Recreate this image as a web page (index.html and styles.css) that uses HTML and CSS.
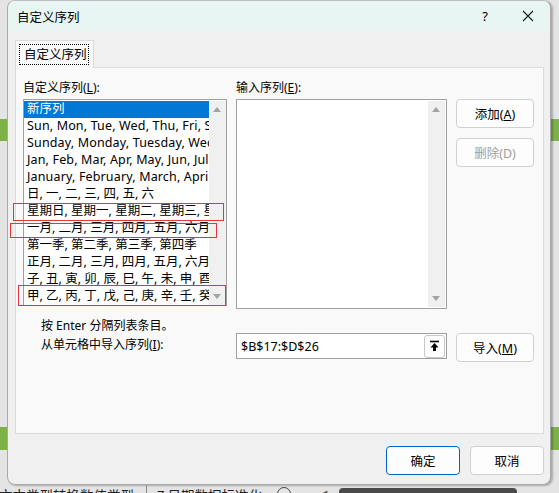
FILE: index.html
```html
<!DOCTYPE html>
<html lang="zh-CN">
<head>
<meta charset="utf-8">
<title>自定义序列</title>
<link rel="stylesheet" href="styles.css">
</head>
<body>
<div class="desk">
  <div class="dialog">
    <div class="titlebar">
      <span class="title">自定义序列</span>
      <span class="help">?</span>
      <span class="close"><svg width="12" height="12" viewBox="0 0 12 12"><path d="M1 1 L11 11 M11 1 L1 11" stroke="#1a1a1a" stroke-width="1.1" fill="none"/></svg></span>
    </div>
    <div class="content">
      <div class="tabs"><div class="tab"><span class="tab-focus">自定义序列</span></div></div>
      <div class="panel">
        <div class="row labels">
          <div class="col-left">自定义序列(<u>L</u>):</div>
          <div class="col-right">输入序列(<u>E</u>):</div>
        </div>
        <div class="row lists">
          <div class="listbox">
            <ul class="items">
              <li class="selected">新序列</li>
              <li class="lat">Sun, Mon, Tue, Wed, Thu, Fri, Sat</li>
              <li class="lat">Sunday, Monday, Tuesday, Wednesday</li>
              <li class="lat">Jan, Feb, Mar, Apr, May, Jun, Jul</li>
              <li class="lat">January, February, March, April, May</li>
              <li>日, 一, 二, 三, 四, 五, 六</li>
              <li>星期日, 星期一, 星期二, 星期三, 星期四</li>
              <li>一月, 二月, 三月, 四月, 五月, 六月, 七月</li>
              <li>第一季, 第二季, 第三季, 第四季</li>
              <li>正月, 二月, 三月, 四月, 五月, 六月, 七月</li>
              <li>子, 丑, 寅, 卯, 辰, 巳, 午, 未, 申, 酉, 戌</li>
              <li>甲, 乙, 丙, 丁, 戊, 己, 庚, 辛, 壬, 癸</li>
            </ul>
            <div class="scrollbar">
              <span class="arrow up"></span>
              <span class="arrow down"></span>
            </div>
            <span class="mark mark1"></span>
            <span class="mark mark2"></span>
            <span class="mark mark3"></span>
          </div>
          <div class="textarea">
            <div class="ta-body"></div>
            <div class="scrollbar">
              <span class="arrow up"></span>
              <span class="arrow down"></span>
            </div>
          </div>
          <div class="side-buttons">
            <button class="btn">添加(<u>A</u>)</button>
            <button class="btn disabled">删除(D)</button>
          </div>
        </div>
        <div class="hint">按 Enter 分隔列表条目。</div>
        <div class="row import">
          <div class="import-label">从单元格中导入序列(<u>I</u>):</div>
          <div class="refbox">
            <span class="ref-text">$B$17:$D$26</span>
            <span class="ref-btn"><svg width="11" height="12" viewBox="0 0 11 12"><path d="M1 1.5 H10" stroke="#000" stroke-width="1.6"/><path d="M5.5 3 L1.5 7.5 H4 V11 H7 V7.5 H9.5 Z" fill="#000"/></svg></span>
          </div>
          <button class="btn import-btn">导入(<u>M</u>)</button>
        </div>
      </div>
      <div class="footer">
        <button class="btn default">确定</button>
        <button class="btn">取消</button>
      </div>
    </div>
  </div>
  <div class="sheetbar">
    <span class="sheet sheet1">文本类型转换数值类型</span>
    <span class="sheet sheet2">7 日期数据标准化</span>
    <span class="sheet-tools">
      <span class="circle"></span>
      <span class="plus">+</span>
      <span class="left">◀</span>
      <span class="hscroll"></span>
    </span>
  </div>
</div>
</body>
</html>
```

FILE: styles.css
```css
* { box-sizing: border-box; }
html, body { margin: 0; padding: 0; }
body {
  width: 559px;
  height: 493px;
  overflow: hidden;
  font-family: "Noto Sans", "Noto Sans CJK SC", sans-serif;
  font-size: 12px;
  color: #000;
  background: linear-gradient(to bottom,
    #e4e4e4 0, #e4e4e4 119px,
    #7db246 119px, #7db246 141px,
    #e4e4e4 141px, #e4e4e4 427px,
    #7db246 427px, #7db246 450px,
    #e4e4e4 450px);
}
.desk { width: 559px; height: 493px; }

.dialog {
  margin-left: 7px;
  width: 544px;
  height: 485px;
  border: 1px solid #a9a9a9;
  border-top-color: #bcbcbc;
  border-radius: 8px;
  background: #f0f0f0;
  box-shadow: 2px 1px 2px rgba(0,0,0,0.25);
  overflow: hidden;
  display: flex;
  flex-direction: column;
}

.titlebar {
  height: 30px;
  background: #e7f6f2;
  display: flex;
  align-items: center;
  padding-left: 9px;
  flex: none;
}
.title { font-size: 12.5px; flex: 1; }
.help { font-size: 13px; width: 14px; margin-right: 30px; text-align: center; }
.close { width: 12px; margin-right: 16px; display: flex; }

.content {
  flex: 1;
  padding: 9px 6px 0 7px;
  display: flex;
  flex-direction: column;
}

.tabs { display: flex; height: 27px; }
.tab {
  width: 79px;
  height: 28px;
  background: #f9f9f9;
  border: 1px solid #dcdcdc;
  border-bottom: none;
  padding: 3px 4px 2px 3px;
  position: relative;
  z-index: 1;
}
.tab-focus {
  display: block;
  height: 21px;
  border: 1px dotted #000;
  line-height: 19px;
  padding-left: 4px;
  font-size: 12.5px;
}

.panel {
  height: 367px;
  background: #f9f9f9;
  border: 1px solid #dcdcdc;
  padding: 12px 8px 0 7px;
}

.row { display: flex; }
.labels { height: 19px; line-height: 15px; }
.col-left { width: 213px; }
.col-right { width: 210px; }

.lists { align-items: flex-start; }
.listbox {
  position: relative;
  width: 204px;
  height: 207px;
  border: 1px solid #a0a0a0;
  background: #fff;
  display: flex;
  padding: 1px 0 0 0;
}
.items {
  list-style: none;
  margin: 0;
  padding: 0;
  flex: 1;
  overflow: hidden;
  font-size: 12.5px;
}
.items li {
  height: 17px;
  line-height: 16px;
  white-space: nowrap;
  overflow: hidden;
  padding-left: 3px;
}
.items li.lat { letter-spacing: 0.15px; }
.items li.selected { background: #0078d7; color: #fff; }

.scrollbar {
  width: 17px;
  background: #f0f0f0;
  position: relative;
  flex: none;
}
.arrow {
  position: absolute;
  left: 4px;
  width: 0; height: 0;
  border-left: 4.5px solid transparent;
  border-right: 4.5px solid transparent;
}
.arrow.up { top: 6px; border-bottom: 5px solid #a3a3a3; }
.arrow.down { bottom: 6px; border-top: 5px solid #a3a3a3; }

.mark {
  position: absolute;
  border: 1px solid #e8333a;
  pointer-events: none;
}
.mark1 { left: -11px; top: 103px; width: 211px; height: 18px; }
.mark2 { left: -14px; top: 123px; width: 207px; height: 15px; }
.mark3 { left: -6px; top: 185px; width: 208px; height: 21px; }

.textarea {
  margin-left: 9px;
  width: 211px;
  height: 210px;
  border: 1px solid #a0a0a0;
  background: #fff;
  display: flex;
  padding: 1px 1px 1px 0;
}
.ta-body { flex: 1; }

.side-buttons {
  margin-left: 9px;
  display: flex;
  flex-direction: column;
  gap: 10px;
}

.btn {
  font-family: inherit;
  font-size: 12.5px;
  color: #000;
  width: 78px;
  height: 29px;
  background: #fdfdfd;
  border: 1px solid #d0d0d0;
  border-radius: 4px;
  padding: 0;
}
.btn.disabled { color: #9d9d9d; }
.btn.default { border-color: #0067c0; }

.hint { margin-top: 9px; padding-left: 18px; height: 17px; line-height: 16px; }
.import { align-items: flex-start; margin-top: 3px; }
.import-label { width: 213px; padding-left: 18px; line-height: 14px; }
.refbox {
  margin-top: -5px;
  width: 211px;
  height: 26px;
  border: 1px solid #a0a0a0;
  background: #fff;
  display: flex;
  align-items: center;
  padding: 0 1px 0 4px;
}
.ref-text { flex: 1; font-size: 12.5px; }
.ref-btn {
  width: 21px;
  height: 23px;
  border: 1px solid #c8c8c8;
  border-radius: 3px;
  display: flex;
  align-items: center;
  justify-content: center;
}
.import-btn { margin-left: 9px; margin-top: -5px; }

.footer {
  display: flex;
  justify-content: flex-end;
  gap: 10px;
  padding: 12px 0 0 0;
}
.footer .btn { width: 74px; height: 29px; }

.sheetbar {
  height: 8px;
  display: flex;
  white-space: nowrap;
  font-family: "Noto Sans CJK SC", sans-serif;
  font-size: 13.5px;
  color: #222;
}
.sheet { line-height: 20px; overflow: hidden; flex: none; }
.sheet1 { width: 148px; margin-left: -1px; border-right: 1px solid #8a8a8a; }
.sheet2 { width: 130px; padding-left: 10px; }
.sheet-tools { display: flex; align-items: flex-start; gap: 10px; }
.circle { width: 14px; height: 14px; border: 1px solid #444; border-radius: 50%; margin-top: 2px; }
.plus { line-height: 20px; }
.left { line-height: 20px; font-size: 10px; color: #555; }
.hscroll { width: 178px; height: 10px; background: #4a4a4a; border-radius: 4px; margin-top: 3px; }
```
